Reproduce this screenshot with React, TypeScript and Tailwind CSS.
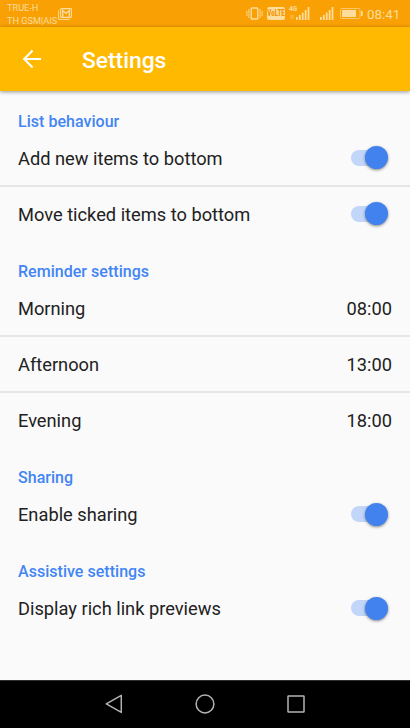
import React from "react";

interface SettingItem {
  label: string;
  time?: string;
}

interface SettingSection {
  title: string;
  items: SettingItem[];
}

const SECTIONS: SettingSection[] = [
  {
    title: "List behaviour",
    items: [{ label: "Add new items to bottom" }, { label: "Move ticked items to bottom" }],
  },
  {
    title: "Reminder settings",
    items: [
      { label: "Morning", time: "08:00" },
      { label: "Afternoon", time: "13:00" },
      { label: "Evening", time: "18:00" },
    ],
  },
  { title: "Sharing", items: [{ label: "Enable sharing" }] },
  { title: "Assistive settings", items: [{ label: "Display rich link previews" }] },
];

function SignalBars() {
  return (
    <svg width="14" height="13" viewBox="0 0 14 13" fill="currentColor">
      <rect x="0" y="10" width="1.8" height="3" />
      <rect x="2.9" y="8" width="1.8" height="5" />
      <rect x="5.8" y="5.6" width="1.8" height="7.4" />
      <rect x="8.7" y="3" width="1.8" height="10" />
      <rect x="11.6" y="0" width="1.8" height="13" />
    </svg>
  );
}

function StatusBar() {
  return (
    <div className="flex h-[27px] shrink-0 items-center bg-[#f8a004] pl-[7px] pr-[9px] text-[#fddc9c]">
      <div className="w-[51px] whitespace-nowrap pt-[2px] text-[9.2px] leading-[12.5px]">
        <p>TRUE-H</p>
        <p>TH GSM|AIS</p>
      </div>
      {/* Gmail notification */}
      <svg width="14" height="12" viewBox="0 0 14 12" fill="none" stroke="currentColor">
        <path d="M.6 2.2v9.2h11" strokeWidth="1" />
        <rect x="2.6" y=".6" width="10.8" height="8.8" rx=".7" strokeWidth="1.1" />
        <path d="M4.7 9V2.5L8 5.3l3.3-2.8V9" strokeWidth="1.4" />
      </svg>

      <div className="ml-auto flex items-center">
        {/* Vibrate */}
        <svg width="17" height="13" viewBox="0 0 17 13" fill="none" stroke="currentColor">
          <rect x="5.2" y="1" width="6.6" height="11" rx=".8" strokeWidth="1.4" />
          <path d="M3.4 2l-1 1.5 1 1.5-1 1.5 1 1.5-1 1.5 1 1.5M1.2 4l-.6 1.2.6 1.3-.6 1.3.6 1.2M13.6 2l1 1.5-1 1.5 1 1.5-1 1.5 1 1.5-1 1.5M15.8 4l.6 1.2-.6 1.3.6 1.3-.6 1.2" strokeWidth="1" />
        </svg>
        <span className="ml-[4px] flex h-[13px] w-[18px] items-center justify-center rounded-[2px] bg-[#fddc9c] text-[#f59600]">
          <span className="scale-x-[0.72] text-[8.5px] font-black leading-none">VoLTE</span>
        </span>
        <div className="relative ml-[11px] h-[13px] w-[14px]">
          <SignalBars />
          <span className="absolute -left-[7px] -top-[2px] text-[6.5px] font-bold leading-[8px]">4G</span>
          <span className="absolute -left-[6px] top-[8px] h-[4px] w-[4px] bg-[#fddc9c]/30" />
        </div>
        <div className="ml-[10px]">
          <SignalBars />
        </div>
        {/* Battery */}
        <svg className="ml-[6px]" width="23" height="11" viewBox="0 0 23 11">
          <rect x=".5" y=".5" width="19.5" height="10" rx="1" fill="none" stroke="currentColor" strokeOpacity=".65" />
          <rect x="2" y="2" width="14" height="7" fill="currentColor" />
          <rect x="21" y="3" width="1.6" height="5" fill="currentColor" />
        </svg>
        <span className="ml-[4px] w-[34px] pt-[2px] text-[13.4px] leading-[14px]">08:41</span>
      </div>
    </div>
  );
}

function AppBar() {
  return (
    <header className="z-10 flex h-16 shrink-0 items-center bg-[#ffb900] pl-[20px] text-white shadow-[0_1px_4px_rgba(0,0,0,0.4)]">
      <svg width="24" height="24" viewBox="0 0 24 24" fill="none" stroke="currentColor" strokeWidth="2.1">
        <path d="M21 12H4.5M12.6 3.6L4.2 12l8.4 8.4" />
      </svg>
      <h1 className="ml-[38px] pt-[3px] text-[22.8px] font-medium leading-7">Settings</h1>
    </header>
  );
}

function Toggle() {
  return (
    <span className="mb-px mr-[4px] flex h-4 w-[37px] items-center justify-end rounded-full bg-[#c2d6f9]">
      <span className="h-[23px] w-[23px] shrink-0 rounded-full bg-[#4182ee] shadow-[0_1px_3px_rgba(0,0,0,0.45)]" />
    </span>
  );
}

function NavBar() {
  return (
    <nav className="flex h-12 shrink-0 items-center justify-between border-t border-[#303030] bg-black pb-px pl-[104px] pr-[105px] text-[#b4b4b4]">
      <svg width="18" height="20" viewBox="0 0 18 20" fill="none" stroke="currentColor" strokeWidth="1.5" strokeLinejoin="round">
        <path d="M17.3 1.4v17L2.3 9.9z" />
      </svg>
      <svg width="20" height="20" viewBox="0 0 20 20" fill="none" stroke="currentColor" strokeWidth="1.5">
        <circle cx="10" cy="10" r="8.9" />
      </svg>
      <svg width="18" height="18" viewBox="0 0 18 18" fill="none" stroke="currentColor" strokeWidth="1.5">
        <rect x="1" y="1" width="16" height="16" rx=".5" />
      </svg>
    </nav>
  );
}

export default function App() {
  return (
    <div className="flex h-screen w-full flex-col overflow-hidden bg-[#fafafa] font-[Roboto,sans-serif]">
      <StatusBar />
      <AppBar />
      <main className="flex-1">
        {SECTIONS.map((section) => (
          <section key={section.title}>
            <h2 className="h-10 px-[18px] pt-[21px] text-[16px] font-medium leading-5 tracking-[0.03px] text-[#4285f4]">{section.title}</h2>
            <ul className="divide-y-2 divide-[#e6e6e6] text-[18.25px] leading-6 text-[#212121]">
              {section.items.map((item) => (
                <li key={item.label} className="box-content flex h-[54px] items-center justify-between px-[18px] only:h-[53px] only:pt-px">
                  <span className="pt-px">{item.label}</span>
                  {item.time ? <span className="pt-px">{item.time}</span> : <Toggle />}
                </li>
              ))}
            </ul>
          </section>
        ))}
      </main>
      <NavBar />
    </div>
  );
}
